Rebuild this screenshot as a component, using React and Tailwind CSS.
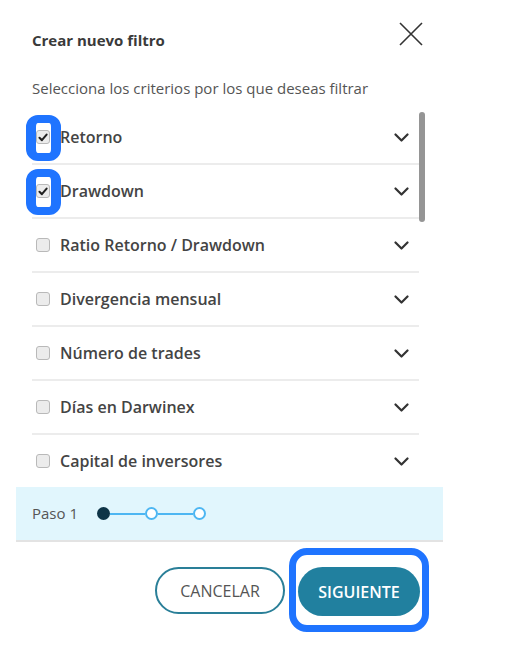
import React from "react";

const criterios = [
  { label: "Retorno", checked: true },
  { label: "Drawdown", checked: true },
  { label: "Ratio Retorno / Drawdown", checked: false },
  { label: "Divergencia mensual", checked: false },
  { label: "Número de trades", checked: false },
  { label: "Días en Darwinex", checked: false },
  { label: "Capital de inversores", checked: false },
];

function Chevron() {
  return (
    <svg width="15" height="9" viewBox="0 0 15 9" fill="none">
      <path d="M1.5 1.5l6 6 6-6" stroke="#333" strokeWidth="2.2" strokeLinecap="round" strokeLinejoin="round" />
    </svg>
  );
}

function Checkbox({ checked }) {
  return (
    <span className="w-[14px] h-[14px] rounded-[3px] border border-[#b9b9b9] bg-[#ececec] flex items-center justify-center shrink-0">
      {checked && (
        <svg width="10" height="9" viewBox="0 0 10 9" fill="none">
          <path d="M1.5 4.8l2.4 2.4L8.6 1.6" stroke="#222" strokeWidth="2" strokeLinecap="round" strokeLinejoin="round" />
        </svg>
      )}
    </span>
  );
}

export default function App() {
  return (
    <div className="w-[510px] h-[646px] bg-white font-['Open_Sans',sans-serif] overflow-hidden">
      <div className="ml-4 w-[427px] bg-white">
        {/* header */}
        <div className="flex items-start justify-between pl-4 pr-[18px] pt-[30px]">
          <h2 className="text-[15px] leading-5 font-bold text-[#3a3a3a]">Crear nuevo filtro</h2>
          <button type="button" className="-mt-2 mr-[1px]">
            <svg width="26" height="24" viewBox="0 0 26 24" fill="none">
              <path d="M2 1l22 22M24 1L2 23" stroke="#333" strokeWidth="1.6" />
            </svg>
          </button>
        </div>
        <p className="pl-4 mt-[28px] text-[15px] leading-5 text-[#555]">
          Selecciona los criterios por los que deseas filtrar
        </p>

        {/* list */}
        <div className="flex pl-4 pr-[18px] mt-[13px] h-[376px] overflow-hidden">
          <div className="flex-1">
            {criterios.map((c) => (
              <div
                key={c.label}
                className="relative h-[54px] flex items-center border-b-2 border-[#ececec] pl-1 pr-[10px]"
              >
                <Checkbox checked={c.checked} />
                <span className="ml-[10px] flex-1 text-[16px] font-semibold text-[#444]">{c.label}</span>
                <Chevron />
                {c.checked && (
                  <span className="absolute left-[-6px] top-[4px] w-[35px] h-[46px] border-x-[10px] border-y-[8px] border-[#1f74ff] rounded-[12px]" />
                )}
              </div>
            ))}
          </div>
          <div className="w-[6px] pt-[1px]">
            <div className="h-[110px] rounded-full bg-[#959595]" />
          </div>
        </div>

        {/* stepper */}
        <div className="h-[55px] bg-[#e1f6fd] border-b-2 border-[#e3e3e3] flex items-center pl-4">
          <span className="text-[15px] text-[#555]">Paso 1</span>
          <div className="flex items-center ml-[19px]">
            <span className="w-[13px] h-[13px] rounded-full bg-[#0e3447]" />
            <span className="w-[35px] h-[2px] bg-[#4db6f2]" />
            <span className="w-[13px] h-[13px] rounded-full bg-white border-2 border-[#4db6f2]" />
            <span className="w-[35px] h-[2px] bg-[#4db6f2]" />
            <span className="w-[13px] h-[13px] rounded-full bg-white border-2 border-[#4db6f2]" />
          </div>
        </div>

        {/* footer */}
        <div className="flex justify-end gap-[13px] pr-[23px] pt-[25px]">
          <button
            type="button"
            className="w-[130px] h-[47px] rounded-full border-2 border-[#2a7f98] text-[16px] text-[#555]"
          >
            CANCELAR
          </button>
          <div className="relative">
            <button
              type="button"
              className="w-[122px] h-[49px] rounded-full bg-[#21809f] text-white text-[16px] font-semibold"
            >
              SIGUIENTE
            </button>
            <span className="absolute left-[-9px] top-[-19px] w-[140px] h-[84px] border-[7px] border-[#1f74ff] rounded-[18px]" />
          </div>
        </div>
      </div>
    </div>
  );
}
